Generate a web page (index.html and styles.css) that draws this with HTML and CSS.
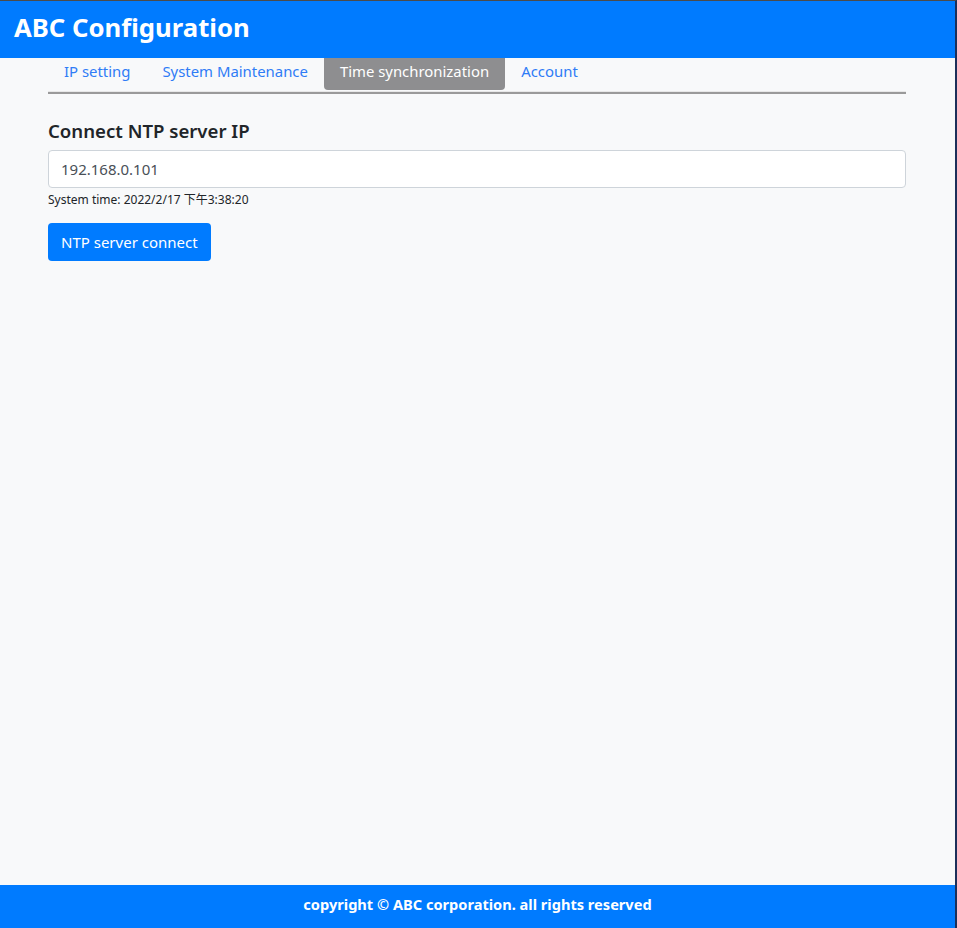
FILE: index.html
```html
<!DOCTYPE html>
<html lang="en">
<head>
<meta charset="utf-8">
<title>ABC Configuration</title>
<link rel="stylesheet" href="styles.css">
</head>
<body>
<div class="frame">
  <header class="topbar">
    <h1 class="brand">ABC Configuration</h1>
  </header>
  <main class="main">
    <nav class="tabs">
      <a class="tab" href="#">IP setting</a>
      <a class="tab" href="#">System Maintenance</a>
      <a class="tab active" href="#">Time synchronization</a>
      <a class="tab" href="#">Account</a>
    </nav>
    <section class="panel">
      <h2 class="label">Connect NTP server IP</h2>
      <input class="field" type="text" value="192.168.0.101">
      <p class="hint">System time: 2022/2/17 下午3:38:20</p>
      <button class="btn">NTP server connect</button>
    </section>
  </main>
  <footer class="footer">copyright © ABC corporation. all rights reserved</footer>
</div>
</body>
</html>
```
FILE: styles.css
```css
* { box-sizing: border-box; }
html, body { margin: 0; padding: 0; height: 100%; }
body {
  font-family: "Segoe UI", "Noto Sans", "Noto Sans CJK TC", sans-serif;
  background: #f8f9fa;
  color: #212529;
}
.frame {
  height: 928px;
  display: flex;
  flex-direction: column;
  border-top: 1px solid #4b4b4b;
  border-right: 2px solid #1c2f5a;
  background: #f8f9fa;
}
.topbar {
  background: #007bff;
  height: 57px;
  display: flex;
  align-items: center;
  padding: 0 14px 4px;
}
.brand {
  margin: 0;
  color: #fff;
  font-size: 25.7px;
  font-weight: 700;
  letter-spacing: 0;
}
.main {
  flex: 1;
  padding: 0 49px 0 48px;
}
.tabs {
  display: flex;
  height: 36px;
  border-bottom: 2px solid #9a9a9a;
  box-shadow: inset 0 -1px 0 #e8e8e8;
}
.tab {
  display: block;
  height: 32px;
  line-height: 27px;
  padding: 0 16px;
  font-size: 14.9px;
  color: #2f7cf6;
  text-decoration: none;
  border-radius: 0 0 4px 4px;
}
.tab.active {
  background: #8e8e90;
  color: #fff;
}
.panel {
  padding-top: 25px;
}
.label {
  margin: 0 0 7px;
  font-size: 18.6px;
  font-weight: 600;
  line-height: 24px;
  color: #212529;
}
.field {
  display: block;
  width: 100%;
  height: 38px;
  border: 1px solid #ced4da;
  border-radius: 4px;
  background: #fff;
  padding: 0 12px;
  font-family: inherit;
  font-size: 15px;
  color: #495057;
}
.hint {
  margin: 3px 0 0;
  font-size: 12px;
  line-height: 18px;
  color: #212529;
}
.btn {
  margin-top: 14px;
  height: 38px;
  padding: 0 13px;
  background: #007bff;
  color: #fff;
  border: none;
  border-radius: 4px;
  font-family: inherit;
  font-size: 15px;
}
.footer {
  background: #007bff;
  height: 43px;
  display: flex;
  align-items: center;
  justify-content: center;
  padding-bottom: 6px;
  color: #fff;
  font-size: 14.6px;
  font-weight: 700;
}
```
